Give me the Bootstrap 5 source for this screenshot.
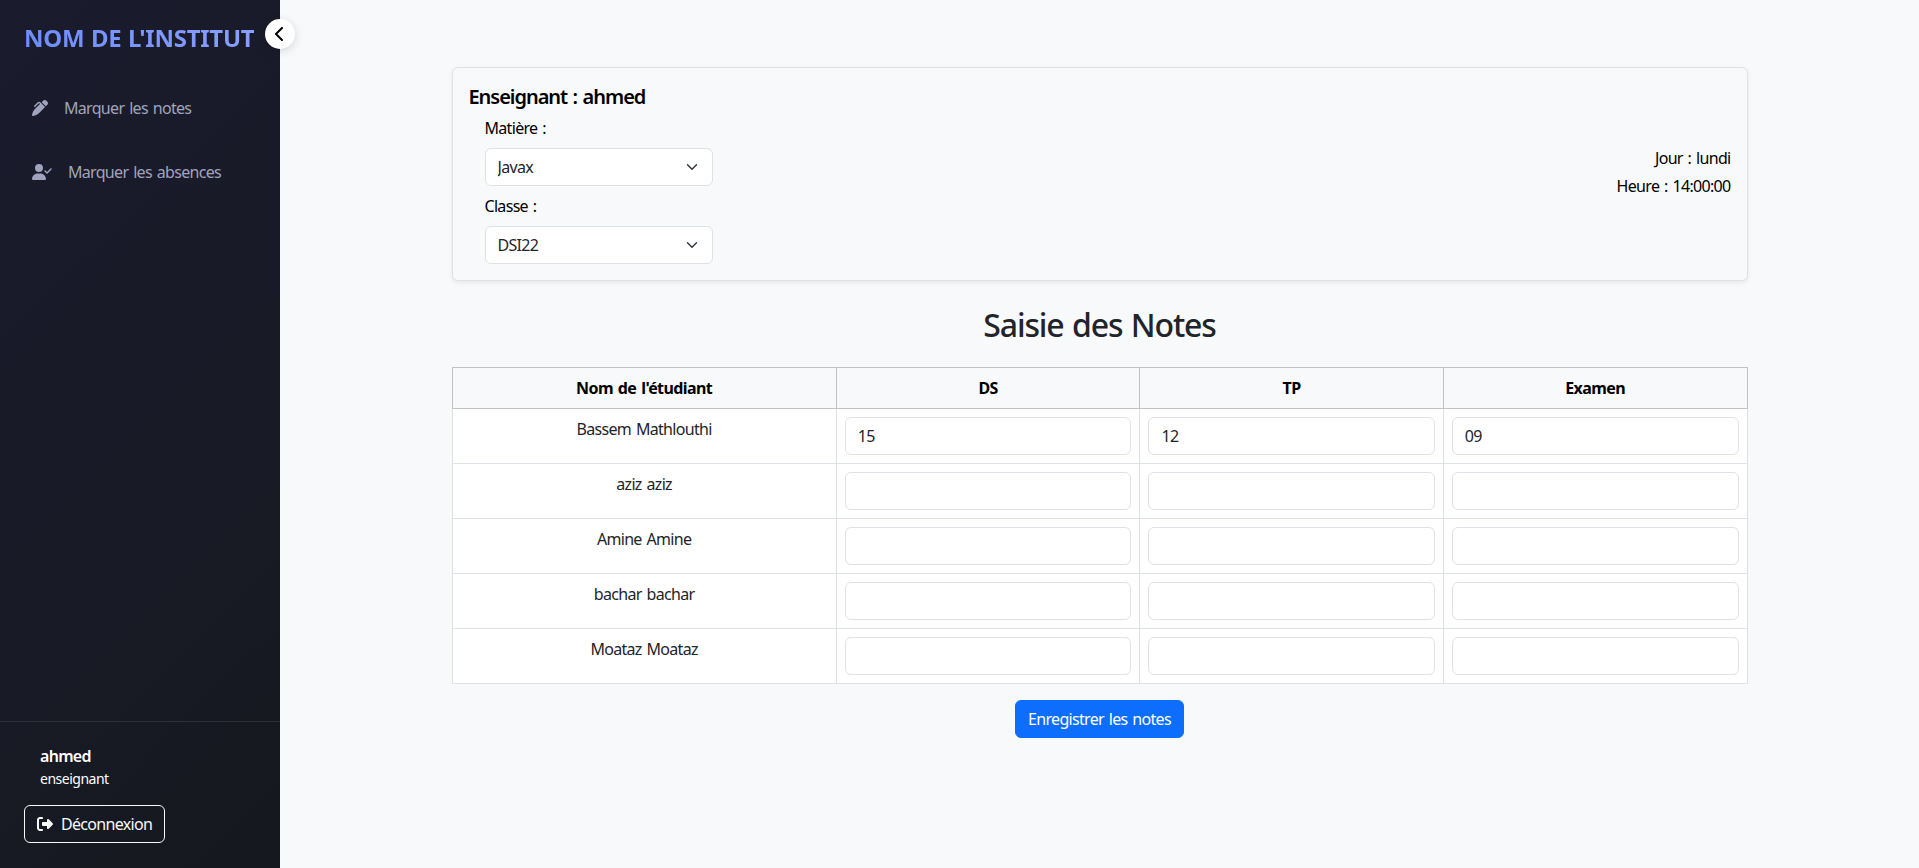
<!DOCTYPE html>
<html lang="fr">
<head>
<meta charset="utf-8">
<meta name="viewport" content="width=device-width, initial-scale=1">
<title>Saisie des Notes</title>
<link href="https://cdn.jsdelivr.net/npm/bootstrap@5.3.0/dist/css/bootstrap.min.css" rel="stylesheet">
<style>
body{font-family:"Segoe UI","Noto Sans",sans-serif;background:#f8f9fa;letter-spacing:-.043em;word-spacing:.085em}
input,select,button{letter-spacing:inherit;word-spacing:inherit}
h2{letter-spacing:-.036em;line-height:38px;padding-top:1px}
.sidebar{width:280px;background:linear-gradient(135deg,#1a1c2e 0%,#16181f 100%)}
.brand-title{font-size:24px;line-height:28.8px;font-weight:700;letter-spacing:-.01em;word-spacing:.02em;background:linear-gradient(45deg,#6b8cff,#8b9fff);-webkit-background-clip:text;background-clip:text;color:transparent;white-space:nowrap}
.toggle-btn{right:-15px;top:19px;width:30px;height:30px;box-shadow:0 2px 10px rgba(0,0,0,.15)}
.side-nav{padding-top:7px}
.side-link{height:48px;padding-left:32px;color:#a0a3bd;text-decoration:none;white-space:nowrap}
.side-foot{border-top:1px solid rgba(255,255,255,.1);height:147px;padding:22px 24px 24px}
.side-foot small{line-height:21px;letter-spacing:-.035em}
.content{padding-top:67px}
.info-card{background:#f8f9fa;color:#000}
.info-card h5{letter-spacing:-.052em;padding-top:1px;line-height:23px}
.pick{width:228px}
.grades{background:#fff;margin-top:-1px}
.grades thead tr{border-color:#c0c2c4}
.grades thead th{border:1px solid #c0c2c4;letter-spacing:-.037em}
.grades tbody tr:first-child,.grades tbody tr:first-child td{border-top:0}
.semi{font-weight:600}
</style>
</head>
<body>
<div class="d-flex vh-100">
  <aside class="sidebar position-relative flex-shrink-0 d-flex flex-column">
    <div class="ps-4 pt-4 pb-4"><div class="brand-title d-inline-block">NOM DE L'INSTITUT</div></div>
    <button class="toggle-btn position-absolute btn bg-white rounded-circle p-0 border-0 d-flex align-items-center justify-content-center" aria-label="Réduire">
      <svg width="10" height="16" viewBox="0 0 320 512" fill="#000"><path d="M9.400 233.400c-12.500 12.500-12.500 32.800 0 45.300l192 192c12.500 12.500 32.800 12.500 45.300 0s12.500-32.800 0-45.300L77.300 256 246.600 86.600c12.500-12.500 12.500-32.800 0-45.300s-32.800-12.500-45.300 0l-192 192z"/></svg>
    </button>
    <nav class="side-nav d-flex flex-column gap-3">
      <a class="side-link d-flex align-items-center" href="#"><svg class="me-3" width="16" height="16" viewBox="0 0 512 512" fill="currentColor"><path d="M453.300 19.300l39.400 39.400c25 25 25 65.500 0 90.500l-52.100 52.100-130-130 52.200-52c25-25 65.500-25 90.500 0zM241 114.900c-9.400-9.400-24.600-9.400-33.900 0L105 217c-9.400 9.400-24.600 9.400-33.900 0s-9.400-24.600 0-33.900L173.100 81c28.100-28.100 73.700-28.100 101.800 0L418 224 229.500 412.500C181.500 460.500 120.300 493 53.700 506.300L28.700 511.400c-7.900 1.600-16-.9-21.700-6.600s-8.100-13.800-6.600-21.700L5.700 458.300C19 391.700 51.500 330.500 99.500 282.500L254.100 128z"/></svg><span>Marquer les notes</span></a>
      <a class="side-link d-flex align-items-center" href="#"><svg class="me-3" width="20" height="16" viewBox="0 0 640 512" fill="currentColor"><path d="M96 128a128 128 0 1 1 256 0A128 128 0 1 1 96 128zM0 482.300C0 383.800 79.800 304 178.300 304h91.400C368.200 304 448 383.800 448 482.300c0 16.400-13.300 29.700-29.700 29.700H29.700C13.300 512 0 498.700 0 482.300zM625 177L497 305c-9.400 9.400-24.600 9.400-33.900 0l-64-64c-9.400-9.400-9.400-24.600 0-33.900s24.600-9.400 33.900 0l47 47L591 143c9.400-9.400 24.600-9.400 33.900 0s9.400 24.600 0 33.900z"/></svg><span>Marquer les absences</span></a>
    </nav>
    <div class="side-foot text-white mt-auto">
      <div class="ps-3 mb-3"><div class="semi">ahmed</div><small class="d-block">enseignant</small></div>
      <button class="btn btn-outline-light d-inline-flex align-items-center gap-2"><svg width="16" height="16" viewBox="0 0 512 512" fill="currentColor"><path d="M377.900 105.900L500.700 228.700c7.200 7.200 11.300 17.100 11.300 27.300s-4.100 20.100-11.300 27.300L377.900 406.100c-6.400 6.400-15 9.900-24 9.900c-18.700 0-33.900-15.200-33.900-33.900l0-62.100-128 0c-17.700 0-32-14.300-32-32l0-64c0-17.700 14.300-32 32-32l128 0 0-62.100c0-18.700 15.200-33.900 33.900-33.900c9 0 17.600 3.600 24 9.900zM160 96L96 96c-17.700 0-32 14.300-32 32l0 256c0 17.700 14.300 32 32 32l64 0c17.700 0 32 14.300 32 32s-14.300 32-32 32l-64 0c-53 0-96-43-96-96L0 128C0 75 43 32 96 32l64 0c17.700 0 32 14.300 32 32s-14.300 32-32 32z"/></svg><span>Déconnexion</span></button>
    </div>
  </aside>
  <main class="flex-grow-1">
    <div class="container content">
      <div class="info-card border rounded shadow-sm p-3 d-flex justify-content-between align-items-center">
        <div>
          <h5 class="mb-2 semi">Enseignant : ahmed</h5>
          <div class="ps-3">
            <label class="form-label mb-2 d-block">Matière :</label>
            <select class="form-select pick mb-2"><option>Javax</option></select>
            <label class="form-label mb-2 d-block">Classe :</label>
            <select class="form-select pick"><option>DSI22</option></select>
          </div>
        </div>
        <div class="text-end"><p class="mb-1">Jour : lundi</p><p class="mb-1">Heure : 14:00:00</p></div>
      </div>
      <h2 class="text-center my-4">Saisie des Notes</h2>
      <table class="grades table table-bordered text-center mb-3">
        <colgroup><col style="width:384.500px"><col style="width:304px"><col style="width:303.500px"><col style="width:304px"></colgroup>
        <thead class="table-light"><tr><th>Nom de l'étudiant</th><th>DS</th><th>TP</th><th>Examen</th></tr></thead>
        <tbody>
          <tr><td>Bassem Mathlouthi</td><td><input class="form-control" value="15"></td><td><input class="form-control" value="12"></td><td><input class="form-control" value="09"></td></tr>
          <tr><td>aziz aziz</td><td><input class="form-control"></td><td><input class="form-control"></td><td><input class="form-control"></td></tr>
          <tr><td>Amine Amine</td><td><input class="form-control"></td><td><input class="form-control"></td><td><input class="form-control"></td></tr>
          <tr><td>bachar bachar</td><td><input class="form-control"></td><td><input class="form-control"></td><td><input class="form-control"></td></tr>
          <tr><td>Moataz Moataz</td><td><input class="form-control"></td><td><input class="form-control"></td><td><input class="form-control"></td></tr>
        </tbody>
      </table>
      <div class="text-center"><button class="btn btn-primary">Enregistrer les notes</button></div>
    </div>
  </main>
</div>
<script src="https://cdn.jsdelivr.net/npm/bootstrap@5.3.0/dist/js/bootstrap.bundle.min.js"></script>
</body>
</html>
